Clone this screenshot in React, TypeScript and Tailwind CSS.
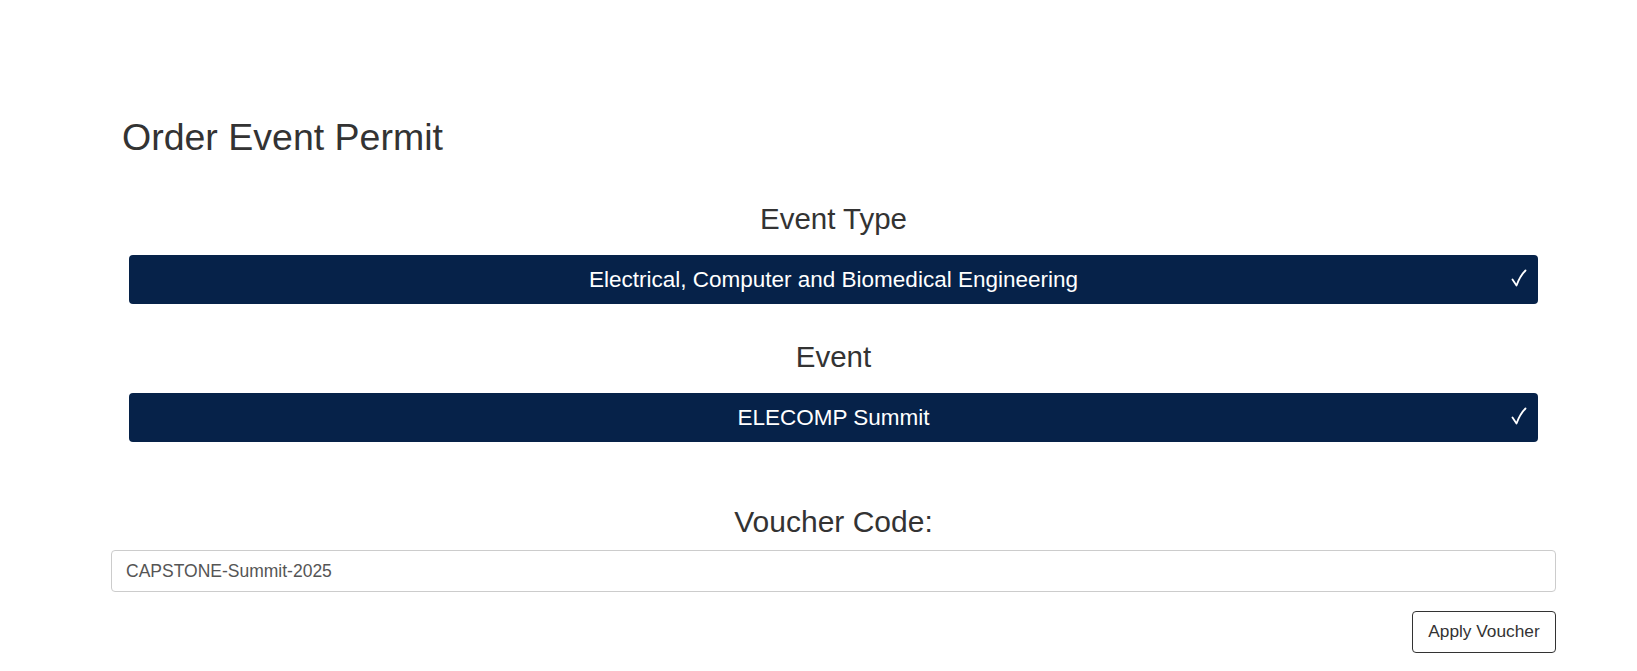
import { useState } from "react";

function CheckMark() {
  return (
    <svg className="w-[16px] h-[18px]" viewBox="0 0 16 18" fill="none" stroke="white" strokeWidth="1.8" strokeLinecap="round" strokeLinejoin="round">
      <path d="M1.5 10.5 L5.5 16.5 Q9 7 14.5 1.5" />
    </svg>
  );
}

function SelectBar({ value }: { value: string }) {
  return (
    <div className="mx-[18px] h-[49px] bg-[#062249] rounded-[4px] relative flex items-center justify-center">
      <span className="text-white text-[22.5px] leading-[49px]">{value}</span>
      <span className="absolute right-[11px] top-[14px]">
        <CheckMark />
      </span>
    </div>
  );
}

export default function App() {
  const [voucher, setVoucher] = useState("CAPSTONE-Summit-2025");

  return (
    <div className="min-h-[671px] bg-white pt-[115px] font-['Liberation_Sans',Arial,sans-serif] text-[#333]">
      <div className="ml-[111px] w-[1445px]">
        <h1 className="pl-[11px] text-[37.5px] leading-[44px] font-normal">Order Event Permit</h1>

        <h2 className="mt-[42px] text-center text-[29.5px] leading-[36px] font-normal">Event Type</h2>
        <div className="mt-[18px]">
          <SelectBar value="Electrical, Computer and Biomedical Engineering" />
        </div>

        <h2 className="mt-[35px] text-center text-[29.5px] leading-[36px] font-normal">Event</h2>
        <div className="mt-[18px]">
          <SelectBar value="ELECOMP Summit" />
        </div>

        <h2 className="mt-[62px] text-center text-[30px] leading-[36px] font-normal">Voucher Code:</h2>
        <input
          type="text"
          value={voucher}
          onChange={(e) => setVoucher(e.target.value)}
          className="mt-[10px] block w-full h-[42px] border border-[#cccccc] rounded-[4px] px-[14px] text-[17.5px] text-[#555] outline-none"
        />

        <div className="flex justify-end mt-[19px]">
          <button
            type="button"
            className="h-[42px] w-[144px] border border-[#333] rounded-[4px] bg-white text-[17.3px] text-[#333]"
          >
            Apply Voucher
          </button>
        </div>
      </div>
    </div>
  );
}
